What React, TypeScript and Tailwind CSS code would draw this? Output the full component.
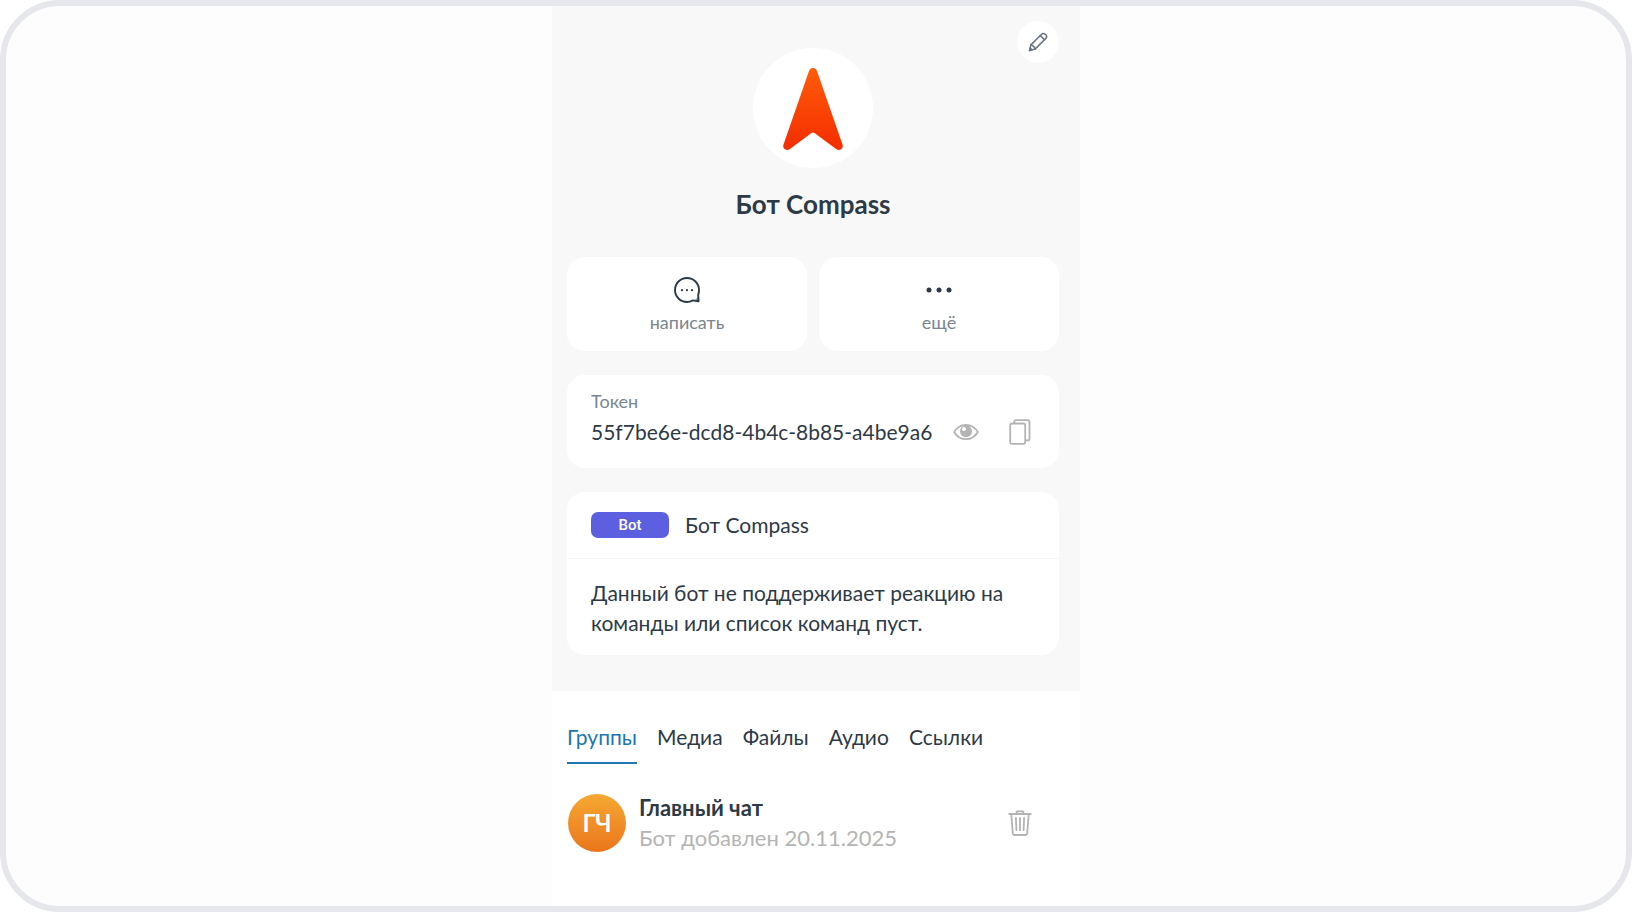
import React, { useState } from "react";

const tabs = ["Группы", "Медиа", "Файлы", "Аудио", "Ссылки"];

function PencilIcon() {
  return (
    <svg width="20" height="20" viewBox="0 0 20 20" fill="none" stroke="#677380" strokeWidth="1.5" strokeLinejoin="round" strokeLinecap="round" aria-hidden="true">
      <path d="M1.5 18.5 2.9 12.9 13.6 2.2C14.6 1.2 16.2 1.2 17.2 2.2L17.8 2.8C18.8 3.8 18.8 5.4 17.8 6.4L7.1 17.1Z" />
      <path d="M12.3 3.6 16.4 7.7" />
      <path d="M2.9 12.9 4.8 13.4 5.4 14.6 6.7 15.2 7.1 17.1" />
      <path d="M1.5 18.5 2.1 16.1 3.9 17.9Z" fill="#677380" />
    </svg>
  );
}

function CompassLogo() {
  return (
    <svg width="120" height="120" viewBox="0 0 120 120" role="img" aria-label="Compass">
      <defs>
        <linearGradient id="compass" x1="0" y1="20" x2="0" y2="102" gradientUnits="userSpaceOnUse">
          <stop offset="0" stopColor="#ff5c0a" />
          <stop offset="1" stopColor="#f42d00" />
        </linearGradient>
      </defs>
      <path
        fill="url(#compass)"
        d="M60 20C61.800 20 63.400 21 64 22.900L89.500 96.500C90.900 100.500 86.700 103.500 83.100 101L61.800 85.200C60.600 84.300 59.400 84.300 58.200 85.200L36.900 101C33.300 103.500 29.100 100.500 30.500 96.500L56 22.900C56.600 21 58.200 20 60 20Z"
      />
    </svg>
  );
}

function ChatIcon() {
  return (
    <svg width="26" height="26" viewBox="0 0 26 26" fill="none" aria-hidden="true">
      <path
        d="M13 1C6.400 1 1 6.400 1 13S6.400 25 13 25C15.300 25 17.200 24.300 19 23.400L24.600 24.400 24.200 18C24.700 16.400 25 14.700 25 13 25 6.400 19.600 1 13 1Z"
        stroke="#2d3a46"
        strokeWidth="1.900"
        strokeLinejoin="round"
      />
      <path d="M24.400 19.500V24.300H19.500Z" fill="#2d3a46" fillOpacity="0.500" />
      <circle cx="8" cy="13.200" r="1.100" fill="#2d3a46" />
      <circle cx="13" cy="13.200" r="1.100" fill="#2d3a46" />
      <circle cx="18" cy="13.200" r="1.100" fill="#2d3a46" />
    </svg>
  );
}

function MoreIcon() {
  return (
    <svg width="26" height="26" viewBox="0 0 26 26" fill="#2d3a46" aria-hidden="true">
      <circle cx="3" cy="13" r="2.500" />
      <circle cx="13" cy="13" r="2.500" />
      <circle cx="23" cy="13" r="2.500" />
    </svg>
  );
}

function EyeIcon() {
  return (
    <svg width="26" height="18" viewBox="0 0 26 18" aria-hidden="true">
      <path d="M1.200 9C4 4 8.300 1.800 13 1.800S22 4 24.800 9C22 14 17.700 16.200 13 16.200S4 14 1.200 9Z" fill="none" stroke="#b4b4b4" strokeWidth="1.800" strokeLinejoin="round" />
      <circle cx="13" cy="8.200" r="6" fill="#b4b4b4" />
      <circle cx="11" cy="6" r="2" fill="#fff" />
    </svg>
  );
}

function CopyIcon() {
  return (
    <svg width="22" height="26" viewBox="0 0 22 26" fill="none" stroke="#b4b4b4" strokeWidth="1.800" strokeLinejoin="round" aria-hidden="true">
      <rect x="1.200" y="4.500" width="15" height="20.300" rx="1.800" />
      <path d="M5.200 4.300V2.800C5.200 1.800 6 1.200 7 1.200H18.800C19.800 1.200 20.500 1.800 20.500 2.800V19.700C20.500 20.700 19.800 21.400 18.800 21.400H16.400" />
    </svg>
  );
}

function TrashIcon() {
  return (
    <svg width="24" height="26" viewBox="0 0 24 26" fill="none" stroke="#b4b4b4" strokeWidth="1.800" strokeLinecap="round" strokeLinejoin="round" aria-hidden="true">
      <path d="M1.200 4H22.800M8.300 3.800 9 1.300H15L15.700 3.800M3.300 4.300 4.800 23.200C4.900 24.300 5.600 25 6.700 25H17.300C18.400 25 19.100 24.300 19.200 23.200L20.700 4.300" />
      <path d="M7.900 8 8.400 20.200M12 8V20.200M16.100 8 15.600 20.200" />
    </svg>
  );
}

export default function App() {
  const [active, setActive] = useState("Группы");

  return (
    <div className="min-h-screen bg-white flex font-['Lato','Noto_Sans',sans-serif] text-[#2d3a46]">
      <div className="flex-1 flex justify-center overflow-hidden rounded-[60px] border-[6px] border-[#e5e7eb] bg-[#fefdfe]">
        <main className="w-full max-w-[528px] bg-white flex flex-col">
          <section className="bg-[#f8f8f8] pl-[15px] pr-[21px] pt-[15px] pb-9 flex flex-col">
            <header className="grid grid-cols-[1fr_auto_1fr] items-start">
              <div className="col-start-2 mt-[27px] size-[120px] rounded-full bg-white">
                <CompassLogo />
              </div>
              <button aria-label="Редактировать" className="justify-self-end size-[42px] rounded-full bg-white flex items-center justify-center">
                <PencilIcon />
              </button>
            </header>
            <h1 className="mt-[18px] text-center text-[26px] leading-9 font-bold">Бот Compass</h1>

            <div className="mt-[35px] grid grid-cols-2 gap-3">
              <button className="h-[94px] pt-[2px] rounded-[18px] bg-white flex flex-col items-center justify-center gap-[7px] text-[18px] leading-6 text-[#7a8591]">
                <ChatIcon />
                написать
              </button>
              <button className="h-[94px] pt-[2px] rounded-[18px] bg-white flex flex-col items-center justify-center gap-[7px] text-[18px] leading-6 text-[#7a8591]">
                <MoreIcon />
                ещё
              </button>
            </div>

            <div className="mt-6 rounded-[18px] bg-white pl-6 pr-7 pt-[14px] pb-5">
              <label htmlFor="token" className="block text-[18px] leading-6 text-[#7a8591]">Токен</label>
              <div className="mt-[3px] flex items-center">
                <input
                  id="token"
                  readOnly
                  defaultValue="55f7be6e-dcd8-4b4c-8b85-a4be9a69"
                  className="min-w-0 flex-1 h-8 text-[21px] leading-8 outline-none bg-transparent"
                />
                <button aria-label="Показать токен" className="ml-5"><EyeIcon /></button>
                <button aria-label="Скопировать токен" className="ml-[30px]"><CopyIcon /></button>
              </div>
            </div>

            <div className="mt-6 rounded-[18px] bg-white">
              <div className="flex items-center gap-4 px-6 h-[67px] border-b border-[#f5f5f5]">
                <span className="w-[78px] h-[26px] rounded-[7px] bg-[#5b5fe0] text-white font-['Roboto',sans-serif] text-[15px] leading-[26px] font-medium text-center">Bot</span>
                <span className="text-[21px] leading-[30px]">Бот Compass</span>
              </div>
              <p className="px-6 pt-[19px] pb-[17px] text-[21px] leading-[30px]">
                Данный бот не поддерживает реакцию на команды или список команд пуст.
              </p>
            </div>
          </section>

          <section className="pl-[15px] pr-[21px] pt-[31px]">
            <div role="tablist" className="flex gap-5">
              {tabs.map((tab) => (
                <button
                  key={tab}
                  role="tab"
                  aria-selected={tab === active}
                  onClick={() => setActive(tab)}
                  className={
                    tab === active
                      ? "pb-[10px] border-b-2 border-[#2076b0] text-[21px] leading-[30px] text-[#2076b0]"
                      : "pb-[10px] border-b-2 border-transparent text-[21px] leading-[30px]"
                  }
                >
                  {tab}
                </button>
              ))}
            </div>
            <div className="mt-[29px] pl-px pr-[27px] flex items-center">
              <div className="size-[58px] rounded-full bg-linear-to-b from-[#f5a833] to-[#ea751b] text-white text-[24px] font-bold flex items-center justify-center">ГЧ</div>
              <div className="ml-[13px] flex-1">
                <h2 className="text-[22px] leading-[30px] font-bold">Главный чат</h2>
                <p className="text-[22px] leading-[30px] text-[#b4b4b4]">Бот добавлен 20.11.2025</p>
              </div>
              <button aria-label="Удалить"><TrashIcon /></button>
            </div>
          </section>
        </main>
      </div>
    </div>
  );
}
